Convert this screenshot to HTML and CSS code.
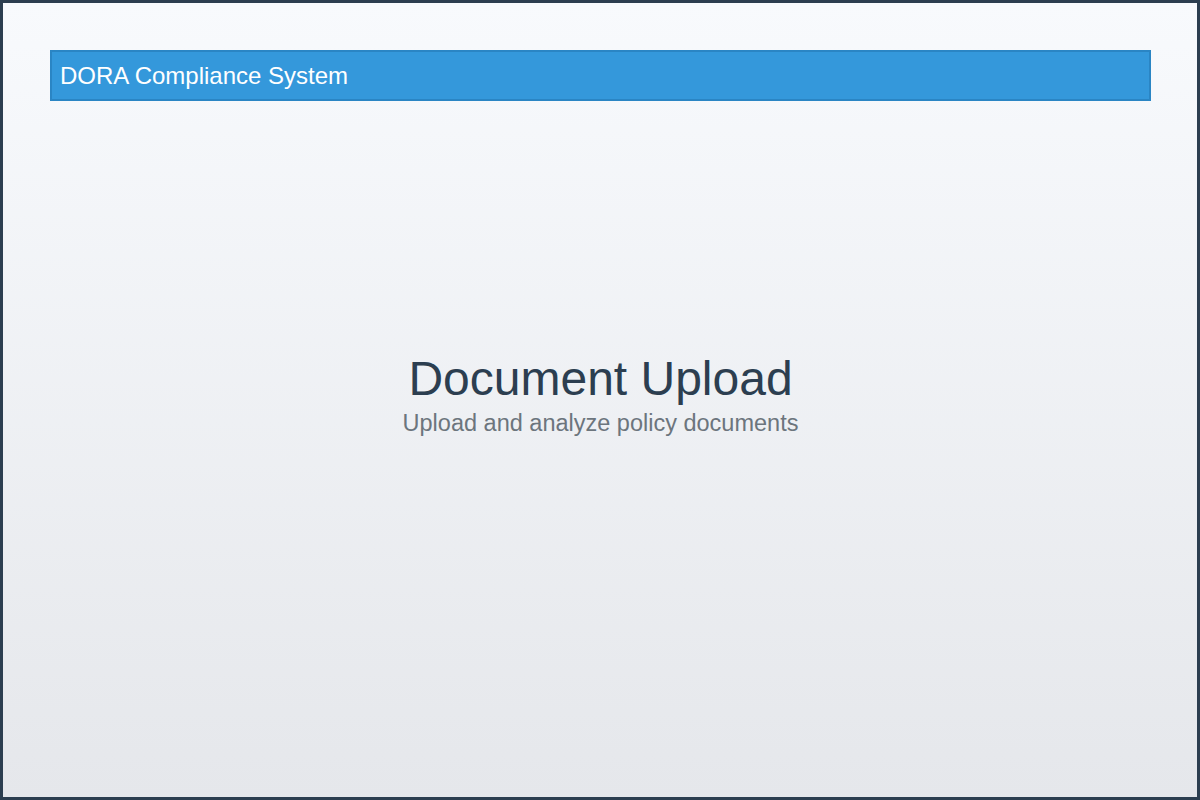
FILE: index.html
```html
<!DOCTYPE html>
<html>
<head>
<meta charset="utf-8">
<link rel="stylesheet" href="styles.css">
</head>
<body>
<div class="frame">
  <header class="topbar">DORA Compliance System</header>
  <main class="hero">
    <h1 class="hero-title">Document Upload</h1>
    <p class="hero-sub">Upload and analyze policy documents</p>
  </main>
</div>
</body>
</html>
```
FILE: styles.css
```css
html, body {
  margin: 0;
  padding: 0;
}
body {
  width: 1200px;
  height: 800px;
  font-family: "Liberation Sans", Arial, sans-serif;
}
.frame {
  box-sizing: border-box;
  width: 1200px;
  height: 800px;
  border: 3px solid #2c3e50;
  background: linear-gradient(to bottom, #f8fafd 0%, #e5e7eb 100%);
  padding: 47px 46px 0 47px;
}
.topbar {
  box-sizing: border-box;
  height: 51px;
  background: #3498db;
  border: 2px solid #2a85c4;
  color: #ffffff;
  font-size: 24px;
  line-height: 47px;
  padding-left: 8px;
}
.hero {
  text-align: center;
  padding-top: 250px;
}
.hero-title {
  margin: 0;
  font-weight: normal;
  font-size: 48px;
  line-height: 56px;
  color: #2c3e50;
}
.hero-sub {
  margin: 0;
  font-size: 23.5px;
  line-height: 33px;
  color: #6c757d;
}
```
